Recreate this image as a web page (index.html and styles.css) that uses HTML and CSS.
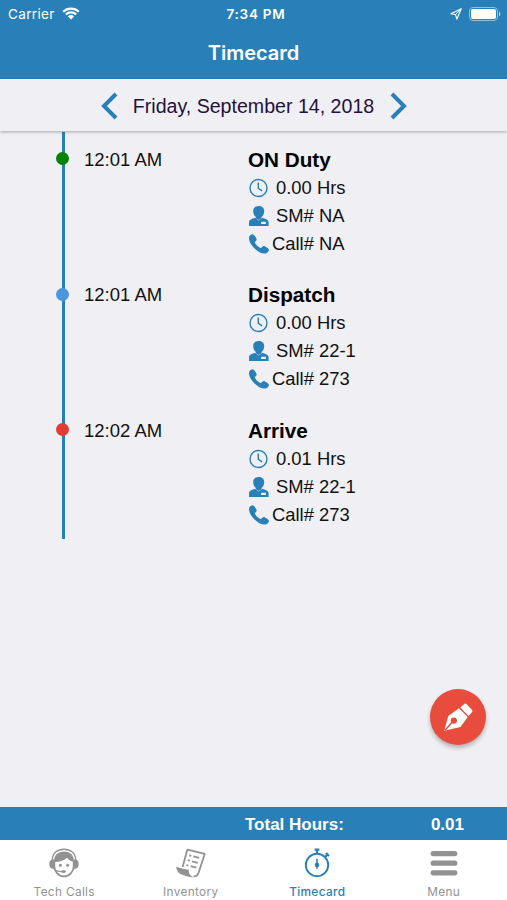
FILE: index.html
```
<!DOCTYPE html>
<html lang="en">
<head>
    <meta charset="UTF-8">
    <meta name="viewport" content="width=device-width, initial-scale=1.0">
    <title>Timecard</title>
    <link rel="stylesheet" href="styles.css">
</head>
<body>
    <svg class="sprite">
        <symbol id="icon-clock" viewBox="0 0 20 20">
            <circle cx="9.500" cy="10" r="8.500" fill="none" stroke="currentColor" stroke-width="1.400"/>
            <path d="M9.300 4.400v6l3.800 2.500" fill="none" stroke="currentColor" stroke-width="1.400"/>
        </symbol>
        <symbol id="icon-person" viewBox="0 0 20 20">
            <path d="M9.700 0C13 0 15.200 2 15.200 5c0 3-1.200 5-2.700 6.100v1.200l-2.800 1.800-2.800-1.800v-1.200C5.400 10 4.200 8 4.200 5c0-3 2.200-5 5.500-5z" fill="currentColor"/>
            <path d="M0 20v-3.700c0-2.800 3-3.400 6.100-4.600l3.600 2.800 3.600-2.800c3.100 1.200 6.300 1.800 6.300 4.600V20z" fill="currentColor"/>
            <rect x="12" y="15.800" width="5" height="2.200" rx=".4" fill="#efeff4"/>
        </symbol>
        <symbol id="icon-phone" viewBox="0 0 20 20">
            <path d="M.3 2.400C1.100 1 3.300-.1 4.300.4c1.600 1 2.700 3 3.300 4.700.4 1.200-.9 2-1.700 2.900-.4.800 1.300 2.900 2.700 4.100 1.200 1 2.700 2.200 3.500 1.800 1-.7 1.900-2.300 3.100-1.800 1.700.8 3.600 2 4.600 3.300.7 1.300-1.100 3.600-3.100 4.100-3.600.6-7.800-1.700-11.100-5.100C2 11-1 6.200.3 2.400z" fill="currentColor"/>
        </symbol>
    </svg>

    <div class="header">
        <div class="status-bar">
            <div class="status-left">
                <span>Carrier</span>
                <svg class="wifi" viewBox="0 0 18 13">
                    <path d="M1.200 4.700a11.200 11.200 0 0 1 15.600 0M3.900 7.500a7.300 7.300 0 0 1 10.200 0" fill="none" stroke="#fff" stroke-width="2.200"/>
                    <path d="M9 12.500L5.900 9.400a4.400 4.400 0 0 1 6.200 0z" fill="#fff"/>
                </svg>
            </div>
            <div class="status-time">7:34 PM</div>
            <div class="status-right">
                <svg class="location" viewBox="0 0 12 12">
                    <path d="M11.200.8L.9 5.800l4.600.7 1.400 4.600z" fill="none" stroke="#fff" stroke-width="1.100" stroke-linejoin="round"/>
                    <path d="M11.200.8L5.500 6.500" stroke="#fff" stroke-width="1"/>
                </svg>
                <svg class="battery" viewBox="0 0 32 14">
                    <rect x=".5" y=".5" width="28" height="13" rx="3.500" fill="none" stroke="#8fc0e0"/>
                    <rect x="2" y="2" width="25" height="10" rx="2" fill="#fff"/>
                    <path d="M30 4.600v4.800c2-.8 2-4 0-4.800z" fill="#a9cfe7"/>
                </svg>
            </div>
        </div>
        <div class="header-title">Timecard</div>
    </div>

    <div class="date-bar">
        <svg class="arrow" viewBox="0 0 17 28"><path d="M15 2L3 14l12 12" fill="none" stroke="currentColor" stroke-width="4"/></svg>
        <div class="date">Friday, September 14, 2018</div>
        <svg class="arrow arrow-next" viewBox="0 0 17 28"><path d="M2 2l12 12L2 26" fill="none" stroke="currentColor" stroke-width="4"/></svg>
    </div>

    <div class="content">
        <ul class="timeline">
            <li class="entry">
                <span class="dot dot-green"></span>
                <div class="entry-time">12:01 AM</div>
                <div class="entry-info">
                    <div class="entry-title">ON Duty</div>
                    <div class="row"><svg><use href="#icon-clock"/></svg>0.00 Hrs</div>
                    <div class="row"><svg><use href="#icon-person"/></svg>SM# NA</div>
                    <div class="row row-call"><svg><use href="#icon-phone"/></svg>Call# NA</div>
                </div>
            </li>
            <li class="entry">
                <span class="dot dot-blue"></span>
                <div class="entry-time">12:01 AM</div>
                <div class="entry-info">
                    <div class="entry-title">Dispatch</div>
                    <div class="row"><svg><use href="#icon-clock"/></svg>0.00 Hrs</div>
                    <div class="row"><svg><use href="#icon-person"/></svg>SM# 22-1</div>
                    <div class="row row-call"><svg><use href="#icon-phone"/></svg>Call# 273</div>
                </div>
            </li>
            <li class="entry">
                <span class="dot dot-red"></span>
                <div class="entry-time">12:02 AM</div>
                <div class="entry-info">
                    <div class="entry-title">Arrive</div>
                    <div class="row"><svg><use href="#icon-clock"/></svg>0.01 Hrs</div>
                    <div class="row"><svg><use href="#icon-person"/></svg>SM# 22-1</div>
                    <div class="row row-call"><svg><use href="#icon-phone"/></svg>Call# 273</div>
                </div>
            </li>
        </ul>
    </div>

    <div class="fab">
        <svg viewBox="0 0 30 30">
            <path d="M.2 28.600L4.400 13.400 15.500 5.400l9.100 9.100-7.600 10.300z" fill="#fff"/>
            <path d="M16.900 4.600L21.200.9q1-.8 2 .2l5.900 6.200q.8.900 0 1.900l-3.700 4.200z" fill="#fff"/>
            <path d="M1 28.200L9 19.200" stroke="#e74c3c" stroke-width="1.500"/>
            <circle cx="10.200" cy="18.200" r="3.200" fill="#e74c3c"/>
        </svg>
    </div>

    <div class="total-bar">
        <div class="total-label">Total Hours:</div>
        <div class="total-value">0.01</div>
    </div>

    <div class="tab-bar">
        <div class="tab">
            <svg viewBox="0 0 30 30">
                <path d="M3.300 12C3.300 5 8.400 1.200 15 1.200S26.700 5 26.700 12" fill="none" stroke="currentColor" stroke-width="1.400"/>
                <path d="M5 14C5 7 9 3.600 15 3.600S25 7 25 14c-3.300-.6-5.600-2-7-4.200-2.500 2.600-7.200 4.400-13 4.200z" fill="currentColor"/>
                <path d="M5.300 12v6.400c0 5 4.500 10 9.700 10s9.700-5 9.700-10V12" fill="none" stroke="currentColor" stroke-width="1.800"/>
                <path d="M5.300 11.500v9.300H3.500C1.300 20.500.3 18.700.3 16s1-4.300 3.200-4.500zM24.700 11.500v9.300h1.800c2.200-.3 3.200-2.100 3.200-4.800s-1-4.300-3.200-4.500z" fill="currentColor"/>
                <circle cx="11.400" cy="17.200" r="1.500" fill="currentColor"/>
                <circle cx="18.600" cy="17.200" r="1.500" fill="currentColor"/>
                <path d="M5 20.500c1.500 2.600 5 3.200 9 3" fill="none" stroke="currentColor" stroke-width="1.200"/>
                <ellipse cx="14.500" cy="23.600" rx="2.600" ry="1.400" fill="currentColor"/>
            </svg>
            <span>Tech Calls</span>
        </div>
        <div class="tab">
            <svg viewBox="0 0 30 30">
                <path d="M6.600 19L11.400 1.600l17.400 4.200-6.200 19c-.9 2.600-2.400 3.900-5 3.600" fill="none" stroke="currentColor" stroke-width="1.800" stroke-linejoin="round"/>
                <path d="M.3 18.400c3.800 2 8 2.200 12.600 3.400-.6 3.200.8 5.800 4.700 7.400-3.500.3-7.400-1-11.200-2.400C2.500 25.300.3 22.400.3 18.400z" fill="currentColor"/>
                <path d="M13.200 7.300l2 .5M17.400 8.400l5.800 1.500M11.800 12.200l2 .5M16 13.300l5.800 1.500M10.400 17l2 .5M14.600 18.100l5.800 1.500" fill="none" stroke="currentColor" stroke-width="1.800"/>
            </svg>
            <span>Inventory</span>
        </div>
        <div class="tab active">
            <svg viewBox="0 0 30 30">
                <circle cx="15" cy="17" r="11.200" fill="none" stroke="currentColor" stroke-width="1.900"/>
                <path d="M12.600 1.600h4.800M15 1.600v4.200M22.700 9.300l3-3M24 5l3 3" fill="none" stroke="currentColor" stroke-width="2.200"/>
                <path d="M15 10.800v10" stroke="currentColor" stroke-width="1.600"/>
                <circle cx="15" cy="17" r="2.300" fill="currentColor"/>
            </svg>
            <span>Timecard</span>
        </div>
        <div class="tab">
            <svg viewBox="0 0 30 30">
                <path d="M4.200 5.600h21.600M4.200 15.200h21.600M4.200 24.800h21.600" stroke="currentColor" stroke-width="5.200" stroke-linecap="round"/>
            </svg>
            <span>Menu</span>
        </div>
    </div>
</body>
</html>
```
FILE: styles.css
```
* {
    margin: 0;
    padding: 0;
    box-sizing: border-box;
}

body {
    height: 900px;
    display: flex;
    flex-direction: column;
    position: relative;
    overflow: hidden;
    font-family: "Liberation Sans", Arial, sans-serif;
    font-size: 18px;
    color: #111;
    background-color: #efeff4;
}

svg {
    display: block;
    flex: none;
}

.sprite {
    display: none;
}

.header {
    height: 79px;
    color: #fff;
    background-color: #2980b9;
}

.status-bar {
    height: 27px;
    padding: 0 6px 0 8px;
    display: grid;
    grid-template-columns: 1fr auto 1fr;
    align-items: center;
    font-family: Inter, sans-serif;
    font-size: 13px;
}

.status-left {
    display: flex;
    align-items: center;
    gap: 7px;
    font-size: 13.5px;
    letter-spacing: .35px;
}

.wifi {
    width: 18px;
    height: 13px;
}

.status-time {
    padding-left: 3px;
    font-size: 13.5px;
    font-weight: 600;
    letter-spacing: .75px;
}

.status-right {
    display: flex;
    align-items: center;
    justify-content: flex-end;
    gap: 7px;
}

.location {
    width: 12px;
    height: 12px;
}

.battery {
    width: 32px;
    height: 14px;
}

.header-title {
    padding-top: 1px;
    line-height: 50px;
    text-align: center;
    font-family: Inter, sans-serif;
    font-size: 20px;
    font-weight: 600;
}

.date-bar {
    height: 52px;
    display: flex;
    align-items: center;
    justify-content: center;
    gap: 15px;
    padding-top: 2px;
    position: relative;
    box-shadow: 0 1px 3px rgba(0,0,0,.3);
}

.arrow {
    width: 17px;
    height: 28px;
    color: #2980b9;
}

.arrow-next {
    margin: 0 -1px 0 1px;
}

.date {
    padding-top: 1px;
    font-size: 19.6px;
    color: #24113f;
}

.content {
    flex: 1;
    padding: 1px 0 0 62px;
}

.timeline {
    list-style: none;
    border-left: 3px solid #2980b9;
}

.entry {
    height: 135.7px;
    padding-top: 13.6px;
    display: flex;
    align-items: flex-start;
}

.dot {
    width: 13px;
    height: 13px;
    margin: 6.4px 0 0 -9px;
    border-radius: 50%;
}

.dot-green {
    background-color: #048204;
}

.dot-blue {
    background-color: #4a96dc;
}

.dot-red {
    background-color: #e23c32;
}

.entry-time {
    width: 164px;
    margin-left: 15px;
    line-height: 28px;
    font-size: 18.5px;
}

.entry-title {
    line-height: 28px;
    font-size: 20.7px;
    font-weight: bold;
    color: #000;
}

.row {
    height: 28px;
    display: flex;
    align-items: center;
    gap: 7px;
    padding-left: 1px;
    font-size: 18.4px;
}

.row svg {
    width: 20px;
    height: 20px;
    color: #2980b9;
}

.row-call {
    gap: 3px;
}

.fab {
    width: 56px;
    height: 56px;
    display: flex;
    align-items: center;
    justify-content: center;
    position: absolute;
    right: 21px;
    bottom: 155px;
    border-radius: 50%;
    background-color: #e74c3c;
    box-shadow: 0 3px 4px rgba(0,0,0,.25);
}

.fab svg {
    width: 29px;
    height: 29px;
}

.total-bar {
    height: 33px;
    display: flex;
    align-items: center;
    padding: 2px 43px 0 245px;
    justify-content: space-between;
    color: #fff;
    font-size: 17px;
    font-weight: bold;
    background-color: #2980b9;
}

.tab-bar {
    height: 60px;
    padding-left: 1px;
    display: flex;
    background-color: #fff;
}

.tab {
    flex: 1;
    padding-top: 8px;
    display: flex;
    flex-direction: column;
    align-items: center;
    gap: 6px;
    font-family: Inter, sans-serif;
    font-size: 11.8px;
    line-height: 16px;
    letter-spacing: .35px;
    color: #929292;
}

.tab svg {
    width: 30px;
    height: 30px;
}

.tab.active {
    color: #2980b9;
    font-weight: 500;
}
```
